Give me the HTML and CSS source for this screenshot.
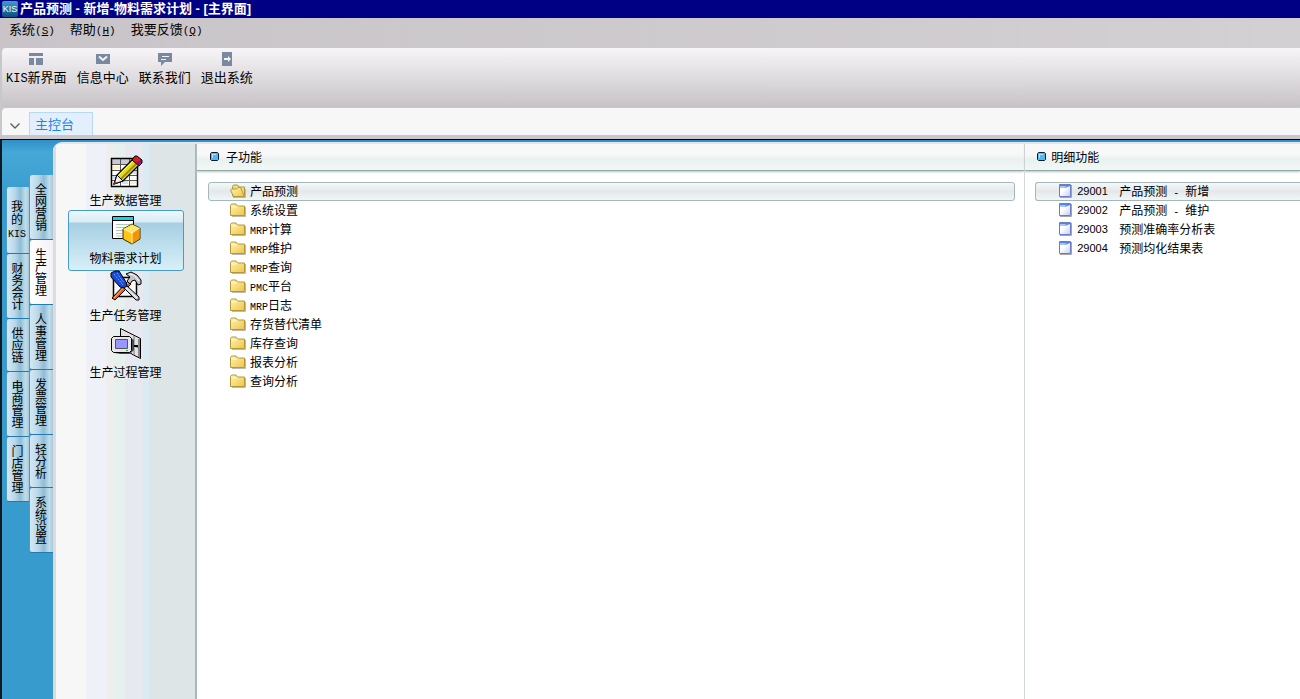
FILE: index.html
```html
<!DOCTYPE html>
<html lang="zh-CN">
<head>
    <meta charset="UTF-8">
    <meta name="viewport" content="width=device-width, initial-scale=1.0">
    <title>产品预测 - 新增-物料需求计划 - [主界面]</title>
    <link rel="stylesheet" href="styles.css">
</head>
<body>
    <!-- shared icons -->
    <svg class="sprite" width="0" height="0">
        <defs>
            <linearGradient id="gold" x1="0" y1="0" x2="1" y2="1">
                <stop offset="0" stop-color="#fff3b0"/>
                <stop offset="1" stop-color="#f0c448"/>
            </linearGradient>
            <linearGradient id="paper" x1="0" y1="0" x2="1" y2="1">
                <stop offset="0.4" stop-color="#ffffff"/>
                <stop offset="1" stop-color="#c3cdf2"/>
            </linearGradient>
        </defs>
        <symbol id="folder" viewBox="0 0 16 14">
            <path d="M2 13.500h13.500V4" fill="none" stroke="#b9b9b9"/>
            <path d="M.5 12.500V2.500l1-1.500h4.500l1.500 2h7v9.500z" fill="url(#gold)" stroke="#b3983a"/>
            <path d="M1.500 4h5l1-1" fill="none" stroke="#fff8d0"/>
        </symbol>
        <symbol id="folder-open" viewBox="0 0 16 14">
            <path d="M3 13.500h12.500V5" fill="none" stroke="#b9b9b9"/>
            <path d="M2.500 12V2.500l1-1.500h4l1.500 2h5.500v9.500H3z" fill="#f3da80" stroke="#b3983a"/>
            <path d="M.5 6l1-1h5l1.500-1.500h2.500l4 9H3.500z" fill="url(#gold)" stroke="#b3983a"/>
        </symbol>
        <symbol id="sheet" viewBox="0 0 13 14">
            <path d="M1 13.500h11.500V1" fill="none" stroke="#a4a4a4"/>
            <path d="M.5.5h11v12H.5z" fill="url(#paper)" stroke="#6d7cc4"/>
            <path d="M1 1h10v1L6 4H1z" fill="#4f83ee"/>
            <path d="M1 4h4l3-1-2-1H1z" fill="#a9c6fa"/>
        </symbol>
        <symbol id="bullet" viewBox="0 0 9 9">
            <path d="M1.500.5h6l1 1v6l-1 1h-6l-1-1v-6z" fill="#56b9ee" stroke="#0b1c2c"/>
            <path d="M2 2h4v1H3v3H2z" fill="#b4e6ff"/>
        </symbol>
    </svg>

    <div class="window">
        <header class="titlebar">
            <span class="app-icon">KIS</span>
            <span class="title">产品预测 - 新增-物料需求计划 - [主界面]</span>
        </header>

        <nav class="menubar">
            <button type="button">系统<span class="en">(<u>S</u>)</span></button>
            <button type="button">帮助<span class="en">(<u>H</u>)</span></button>
            <button type="button">我要反馈<span class="en">(<u>Q</u>)</span></button>
        </nav>

        <div class="toolbar">
            <button type="button">
                <svg width="14" height="14" viewBox="0 0 14 14" fill="#7889a0"><path d="M0 1h14v3H0zM0 6h5v7H0zM7 6h7v7H7z"/></svg>
                <span><span class="en">KIS</span>新界面</span>
            </button>
            <button type="button">
                <svg width="14" height="14" viewBox="0 0 14 14"><path d="M0 2h14v10H0z" fill="#7889a0"/><path d="M3 4.500l4 3.500 4-3.500" fill="none" stroke="#f4f4f8" stroke-width="2"/></svg>
                <span>信息中心</span>
            </button>
            <button type="button">
                <svg width="14" height="14" viewBox="0 0 14 14"><path d="M0 1h14v9H7l-4 4v-4H0z" fill="#7889a0"/><path d="M4 4.500h7M3 7.500h5" stroke="#f4f4f8" stroke-width="1"/></svg>
                <span>联系我们</span>
            </button>
            <button type="button">
                <svg width="14" height="14" viewBox="0 0 14 14"><path d="M2 0h10v14H2z" fill="#7889a0"/><path d="M4 6h4V4l3 3-3 3V8H4z" fill="#f4f4f8"/></svg>
                <span>退出系统</span>
            </button>
        </div>

        <div class="tabstrip">
            <button type="button" class="tab-list" aria-label="标签列表">
                <svg width="10" height="6" viewBox="0 0 10 6"><path d="M.5.5L5 5 9.500.5" fill="none" stroke="#5c5c5c" stroke-width="1.300"/></svg>
            </button>
            <button type="button" class="tab">主控台</button>
        </div>

        <main class="workspace">
            <nav class="side side-outer">
                <button type="button" class="short">我<br>的<br><span class="en">KIS</span></button>
                <button type="button">财务会计</button>
                <button type="button">供应链</button>
                <button type="button">电商管理</button>
                <button type="button">门店管理</button>
            </nav>
            <nav class="side side-inner">
                <button type="button">全网营销</button>
                <button type="button" class="active">生产管理</button>
                <button type="button">人事管理</button>
                <button type="button">发票管理</button>
                <button type="button">轻分析</button>
                <button type="button">系统设置</button>
            </nav>

            <div class="panel">
                <nav class="modules">
                    <button type="button">
                        <svg width="34" height="34" viewBox="0 0 34 34">
                            <path d="M2.500 3.500h26v28h-26z" fill="#fff" stroke="#000"/>
                            <path d="M3 4h25v5H3z" fill="#c9c9cf"/>
                            <path d="M4 11h7v3H4zM13 16h6v3h-6zM21 26h6v3h-6z" fill="#fff2b8"/>
                            <path d="M4 21h7v3H4zM21 16h6v3h-6zM13 26h6v3h-6z" fill="#cfe0f6"/>
                            <path d="M3 9.500h25M3 15.500h25M3 20.500h25M3 25.500h25M11.500 4v27M20.500 4v27" stroke="#55555f"/>
                            <path d="M2.500 3.500h26v28h-26z" fill="none" stroke="#000" stroke-width="1.500"/>
                            <path d="M5 29l3-9L25 3l6 6-17 17z" fill="#e6d81c" stroke="#000" stroke-width="1.300"/>
                            <path d="M12 24L28 8" stroke="#9b9110" stroke-width="2"/>
                            <path d="M9 21L25 5" stroke="#fffba0"/>
                            <path d="M5 29l3-9 6 6z" fill="#f3eeee" stroke="#000"/>
                            <path d="M5 29l1-3 2 2z" fill="#c0392b"/>
                            <path d="M23 5l3-4h2l5 4v3l-3 3z" fill="#d51e26" stroke="#000"/>
                            <path d="M29 10l3-3V5l-5 3z" fill="#6a1a8c"/>
                        </svg>
                        <span>生产数据管理</span>
                    </button>
                    <button type="button" class="active">
                        <svg width="34" height="34" viewBox="0 0 34 34">
                            <path d="M3.500 3.500h21v22h-21z" fill="#fff" stroke="#000"/>
                            <path d="M4 4h20v3H4z" fill="#12d6e8"/>
                            <path d="M4 7.500h20" stroke="#000"/>
                            <path d="M7 11.500h14M7 14.500h12M7 17.500h7M7 20.500h6M7 23h6" stroke="#a6cfae"/>
                            <path d="M14 16l9-5 8 4v11l-8 5-9-5z" fill="#ffc414" stroke="#3b2c00"/>
                            <path d="M14.500 16L23 11.500l7.500 3.500-8 5z" fill="#ffe566"/>
                            <path d="M23 20l7.500-5v10.500L23 30.500z" fill="#f59300"/>
                            <path d="M14.500 16l8.500 4v10.500M23 20l7.500-5" fill="none" stroke="#fff6c4"/>
                        </svg>
                        <span>物料需求计划</span>
                    </button>
                    <button type="button">
                        <svg width="34" height="34" viewBox="0 0 34 34">
                            <path d="M4.500 7.500h23v19h-23z" fill="#f8f8f8" stroke="#000" stroke-width="1.500"/>
                            <path d="M3 28L19 11l3 3L6 30z" fill="#e8601c" stroke="#000"/>
                            <path d="M5 28L19 13" stroke="#ffae74"/>
                            <path d="M17 4l5-2 6 3 4 5v4l-3 1-3-5-3 1-2 3-3-3 3-4z" fill="#c4c4c8" stroke="#000"/>
                            <path d="M20 4l5 1 5 6" fill="none" stroke="#fff"/>
                            <path d="M14 17l3-2 13 12v3h-3z" fill="#c9c9d0" stroke="#000"/>
                            <path d="M16 17l12 11" stroke="#fff"/>
                            <path d="M2 3l4-2h4l7 11 1 4-3 2-4-1-9-10z" fill="#1a48d4" stroke="#000"/>
                            <path d="M5 4l9 11M8 3l7 10" stroke="#6fa0ff" stroke-dasharray="2 1"/>
                        </svg>
                        <span>生产任务管理</span>
                    </button>
                    <button type="button">
                        <svg width="34" height="34" viewBox="0 0 34 34">
                            <path d="M11.500 10V1.500l20 10v20l-7-3.500-13-8z" fill="#e2e2e4" stroke="#000"/>
                            <path d="M30 12v18" stroke="#888" stroke-width="2"/>
                            <path d="M25 9v19M25 19l5 2" fill="none" stroke="#777"/>
                            <path d="M25 18h4v2h-4z" fill="#000"/>
                            <path d="M6 27h15l4-4V13l-3-2v13z" fill="#4b4b4f"/>
                            <path d="M4.500 9.500h16l2 2v12l-2 2h-16l-2-2v-12z" fill="#e8e8ea" stroke="#000"/>
                            <path d="M6.500 12.500h12v9h-12z" fill="#9a96ff" stroke="#55555c"/>
                            <path d="M17 23h2v1h-2z" fill="#12b43a"/>
                        </svg>
                        <span>生产过程管理</span>
                    </button>
                </nav>

                <section class="functions">
                    <h2><svg width="9" height="9"><use href="#bullet"/></svg>子功能</h2>
                    <ul>
                        <li><button type="button" class="active"><svg width="16" height="14"><use href="#folder-open"/></svg>产品预测</button></li>
                        <li><button type="button"><svg width="16" height="14"><use href="#folder"/></svg>系统设置</button></li>
                        <li><button type="button"><svg width="16" height="14"><use href="#folder"/></svg><span><span class="en">MRP</span>计算</span></button></li>
                        <li><button type="button"><svg width="16" height="14"><use href="#folder"/></svg><span><span class="en">MRP</span>维护</span></button></li>
                        <li><button type="button"><svg width="16" height="14"><use href="#folder"/></svg><span><span class="en">MRP</span>查询</span></button></li>
                        <li><button type="button"><svg width="16" height="14"><use href="#folder"/></svg><span><span class="en">PMC</span>平台</span></button></li>
                        <li><button type="button"><svg width="16" height="14"><use href="#folder"/></svg><span><span class="en">MRP</span>日志</span></button></li>
                        <li><button type="button"><svg width="16" height="14"><use href="#folder"/></svg>存货替代清单</button></li>
                        <li><button type="button"><svg width="16" height="14"><use href="#folder"/></svg>库存查询</button></li>
                        <li><button type="button"><svg width="16" height="14"><use href="#folder"/></svg>报表分析</button></li>
                        <li><button type="button"><svg width="16" height="14"><use href="#folder"/></svg>查询分析</button></li>
                    </ul>
                </section>

                <section class="functions details">
                    <h2><svg width="9" height="9"><use href="#bullet"/></svg>明细功能</h2>
                    <ul>
                        <li><button type="button" class="active"><svg width="13" height="14"><use href="#sheet"/></svg><span class="code">29001</span><span>产品预测<span class="en"> - </span>新增</span></button></li>
                        <li><button type="button"><svg width="13" height="14"><use href="#sheet"/></svg><span class="code">29002</span><span>产品预测<span class="en"> - </span>维护</span></button></li>
                        <li><button type="button"><svg width="13" height="14"><use href="#sheet"/></svg><span class="code">29003</span><span>预测准确率分析表</span></button></li>
                        <li><button type="button"><svg width="13" height="14"><use href="#sheet"/></svg><span class="code">29004</span><span>预测均化结果表</span></button></li>
                    </ul>
                </section>
            </div>
        </main>
    </div>
</body>
</html>
```

FILE: styles.css
```css
* {
    box-sizing: border-box;
}

body {
    margin: 0;
    font-family: "Noto Sans CJK SC", sans-serif;
    font-size: 12px;
    line-height: 18px;
    color: #000;
}

button {
    margin: 0;
    padding: 0;
    border: none;
    background: none;
    font: inherit;
    color: inherit;
    white-space: nowrap;
}

svg {
    flex: none;
    display: block;
}

.sprite {
    position: absolute;
}

.en {
    font-family: "Liberation Mono", monospace;
    font-size: 10px;
    line-height: 10px;
    white-space: pre;
}

.window {
    min-height: 100vh;
    display: flex;
    flex-direction: column;
    background: #cac7ca;
    overflow: hidden;
}

/* title and menu */
.titlebar {
    display: flex;
    align-items: center;
    gap: 2px;
    height: 18px;
    padding-left: 2px;
    background: #000084;
    color: #fff;
    font-family: "Liberation Sans", "Noto Sans CJK SC", sans-serif;
    font-size: 13px;
    font-weight: bold;
    white-space: nowrap;
}

.app-icon {
    width: 16px;
    height: 16px;
    border-radius: 2px;
    background: linear-gradient(#3aa0cc, #0b4d80);
    font-family: "Liberation Sans", sans-serif;
    font-size: 9px;
    font-weight: normal;
    line-height: 16px;
    text-align: center;
}

.menubar {
    display: flex;
    gap: 15px;
    height: 30px;
    padding: 2px 9px 10px;
    background: linear-gradient(90deg, #c8c4c8, #d3d0d3);
    font-size: 13px;
}

.menubar .en {
    font-size: 11px;
}

/* toolbar */
.toolbar {
    display: flex;
    align-items: flex-start;
    gap: 10px;
    height: 59px;
    margin-left: 2px;
    padding: 4px;
    border-radius: 4px 0 0 0;
    background: linear-gradient(#f8f5f8, #e2dfe2 45%, #c6c2c6);
    font-size: 13px;
}

.toolbar button {
    display: flex;
    flex-direction: column;
    align-items: center;
    gap: 2px;
}

.toolbar .en {
    font-size: 12px;
}

.tabstrip {
    display: flex;
    align-items: flex-end;
    height: 27px;
    margin: 1px 0 4px 2px;
    border-radius: 4px 0 0 0;
    background: #f7f7f7;
}

.tab-list {
    width: 27px;
    height: 22px;
    padding: 4px 8px 0;
}

.tab {
    width: 64px;
    height: 23px;
    padding: 0 5px 1px;
    border: 1px solid #b6d8fa;
    border-bottom: none;
    background: #e3effc;
    color: #1a85ee;
    font-size: 13px;
    text-align: left;
}

/* workspace */
.workspace {
    flex: 1;
    display: flex;
    align-items: stretch;
    padding-left: 4px;
    border-top: 1px solid #000;
    border-left: 2px solid #0d1a24;
    background: linear-gradient(#2f8fca, #46a8d6 12px, #389bcd 60px);
}

.side {
    display: flex;
    flex-direction: column;
}

.side-outer {
    width: 23px;
    padding-top: 47px;
}

.side-inner {
    width: 24px;
    padding-top: 35px;
}

.side button {
    display: flex;
    align-items: center;
    justify-content: center;
    padding: 8px 2px 8px 0;
    border-left: 1px solid #4a9dcb;
    border-bottom: 1px solid #2478b4;
    border-radius: 3px 0 0 3px;
    background: linear-gradient(90deg, #d5e8f5, #b9d8e9 35%, #8fbdd6 60%, #c3dde9 85%, #a4cadb);
    line-height: 12px;
    writing-mode: vertical-rl;
    text-orientation: upright;
}

.side .short {
    display: block;
    padding: 12px 2px 13px 0;
    line-height: 13px;
    writing-mode: horizontal-tb;
}

.side .active {
    background: linear-gradient(90deg, #fff, #f2f2f4);
}

.panel {
    flex: 1;
    display: grid;
    grid-template-columns: 144px 3fr 1fr;
    margin-top: 2px;
    border-top: 2px solid #e3e7e9;
    border-radius: 9px 0 0 0;
    background: #fff;
    overflow: hidden;
}

/* modules */
.modules {
    display: flex;
    flex-direction: column;
    padding: 9px 11px 0 12px;
    border-left: 3px solid #dcdce0;
    border-right: 2px solid #a9b8b8;
    background: linear-gradient(90deg, #f7f7f7 30px, #eef2f8 30px 50px, #eeeeee 50px 58px, #e6f0ed 58px 69px, #e6e9ef 69px 87px, #dcebf2 87px 93px, #dde5e7 93px);
}

.modules button {
    display: flex;
    flex-direction: column;
    align-items: center;
    gap: 2px;
    height: 57px;
    padding: 2px 1px 0 0;
}

.modules .active {
    height: 61px;
    margin-bottom: -3px;
    border: 1px solid #4a9cc8;
    border-radius: 3px;
    background: linear-gradient(#eef7fb, #d9ecf5 11px, #a6cfe2 12px, #d8f0f8);
}

/* function lists */
.functions h2 {
    display: flex;
    align-items: center;
    gap: 7px;
    height: 27px;
    margin: 0;
    padding: 0 0 1px 13px;
    border-bottom: 1px solid #93a8a6;
    background: linear-gradient(#f8f8f8 40%, #e9f1ee 60%, #f2f8f5);
    box-shadow: 0 1px 2px #b9c6c4;
    font-size: 12px;
    font-weight: normal;
}

.functions ul {
    margin: 0;
    padding: 11px 9px 0 11px;
    list-style: none;
}

.functions li button {
    display: flex;
    align-items: center;
    gap: 4px;
    width: 100%;
    height: 19px;
    padding: 0 0 1px 21px;
    border: 1px solid transparent;
    border-radius: 3px;
}

.functions li .active {
    border-color: #a3b8ba;
    background: linear-gradient(#f6f7f8, #e3e8ea 50%, #f3f6f7);
}

.functions.details {
    border-left: 1px solid #d4d8da;
}

.details h2 {
    gap: 5px;
    padding-left: 12px;
}

.functions.details ul {
    padding-right: 0;
    padding-left: 10px;
}

.functions.details li button {
    gap: 5px;
    padding-left: 23px;
}

.functions.details li .active {
    border-right: none;
    border-radius: 3px 0 0 3px;
}

.code {
    width: 37px;
    font-family: "Liberation Sans", Arial, sans-serif;
    font-size: 11px;
    text-align: left;
}
```
